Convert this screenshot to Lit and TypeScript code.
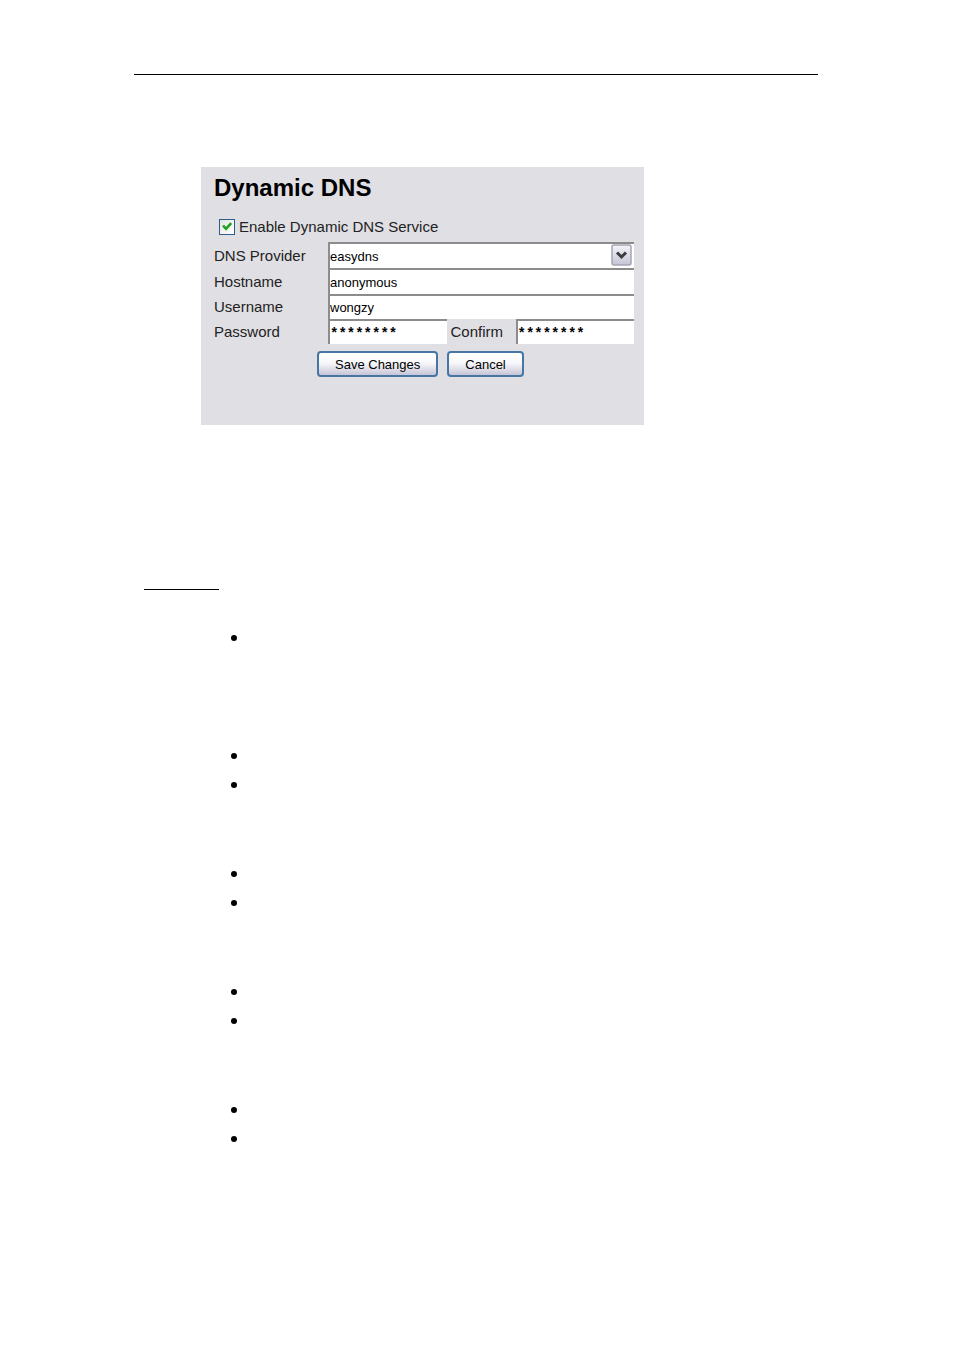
import { LitElement, html, css } from "lit";
import { customElement } from "lit/decorators.js";

@customElement("dns-panel")
class DnsPanel extends LitElement {
  static styles = css`
    :host {
      display: block;
      box-sizing: border-box;
      background: #e0dfe4;
      padding: 6px 10px 48px 13px;
      font-family: "Liberation Sans", Arial, sans-serif;
      font-size: 15px;
      color: #222;
    }
    * {
      box-sizing: border-box;
    }
    .title {
      margin: 0;
      font-size: 24px;
      line-height: 30px;
      font-weight: bold;
      color: #000;
    }
    .enable {
      display: flex;
      align-items: center;
      gap: 4px;
      height: 22px;
      margin: 13px 0 4px 5px;
    }
    .enable label {
      line-height: 16px;
    }
    .tick,
    .select {
      display: grid;
      align-items: center;
    }
    .tick > *,
    .select > * {
      grid-area: 1 / 1;
    }
    .box {
      appearance: none;
      width: 16px;
      height: 16px;
      margin: 0;
      border: 1px solid #2c5f8e;
      background: linear-gradient(135deg, #e4e4e0, #fff);
    }
    .mark {
      width: 16px;
      height: 16px;
      pointer-events: none;
      visibility: hidden;
    }
    .box:checked + .mark {
      visibility: visible;
    }
    .fields {
      display: grid;
      grid-template-columns: 114px 1fr;
      grid-template-rows: 26px 26px 25px 25px;
      align-items: center;
    }
    .field {
      width: 100%;
      min-width: 0;
      height: 100%;
      margin: 0;
      padding: 0;
      border: 0 solid #8c8c8c;
      border-width: 2px 0 0 2px;
      border-radius: 0;
      background: #fff;
      color: #000;
      font: 13px "Liberation Sans", Arial, sans-serif;
      outline: none;
      appearance: none;
    }
    .secret {
      padding-top: 2px;
      font: bold 14px "Liberation Mono", "Courier New", monospace;
    }
    .select {
      height: 100%;
      grid-template-rows: 100%;
    }
    .drop {
      justify-self: end;
      width: 21px;
      height: 22px;
      margin-right: 2px;
      pointer-events: none;
    }
    .pair {
      display: grid;
      grid-template-columns: 1fr 61px 1fr;
      column-gap: 4px;
      align-items: center;
      height: 100%;
    }
    .actions {
      display: flex;
      gap: 9px;
      margin: 7px 0 0 103px;
    }
    .button {
      height: 26px;
      padding: 0 16px;
      border: 2px solid #4576a4;
      border-radius: 4px;
      background: linear-gradient(#fff 0%, #f8f8fb 45%, #c6c5d7 100%);
      color: #000;
      font: 13px "Liberation Sans", Arial, sans-serif;
    }
  `;

  render() {
    return html`
      <h1 class="title">Dynamic DNS</h1>
      <div class="enable">
        <span class="tick">
          <input class="box" type="checkbox" id="enable" checked />
          <svg class="mark" viewBox="0 0 16 16" aria-hidden="true">
            <path d="M4 6.5 L7 9.8 L12.2 4.2" fill="none" stroke="#21a121" stroke-width="2.6" />
          </svg>
        </span>
        <label for="enable">Enable Dynamic DNS Service</label>
      </div>
      <div class="fields">
        <label for="provider">DNS Provider</label>
        <div class="select">
          <select class="field" id="provider">
            <option>easydns</option>
          </select>
          <svg class="drop" viewBox="0 0 21 22" aria-hidden="true">
            <defs>
              <linearGradient id="face" x2="0" y2="1">
                <stop offset="0" stop-color="#f4f4f8" />
                <stop offset="1" stop-color="#c4c4d6" />
              </linearGradient>
            </defs>
            <rect x="1" y="1" width="19" height="20" rx="2" fill="url(#face)" stroke="#a5a5b5" stroke-width="1.5" />
            <path d="M6 8.5 L10.5 13 L15 8.5" fill="none" stroke="#3c3c40" stroke-width="3" />
          </svg>
        </div>
        <label for="host">Hostname</label>
        <input class="field" id="host" type="text" value="anonymous" />
        <label for="user">Username</label>
        <input class="field" id="user" type="text" value="wongzy" />
        <label for="pass">Password</label>
        <div class="pair">
          <input class="field secret" id="pass" type="text" value="********" />
          <label for="confirm">Confirm</label>
          <input class="field secret" id="confirm" type="text" value="********" />
        </div>
      </div>
      <div class="actions">
        <button class="button" type="button">Save Changes</button>
        <button class="button" type="button">Cancel</button>
      </div>
    `;
  }
}

@customElement("app-root")
class AppRoot extends LitElement {
  static styles = css`
    :host {
      display: block;
      background: #fff;
      padding: 74px 136px 160px 134px;
      font-family: "Liberation Sans", Arial, sans-serif;
    }
    .rule {
      height: 1px;
      margin: 0;
      border: 0;
      background: #000;
    }
    .panel {
      max-width: 443px;
      margin: 92px 0 0 67px;
    }
    .underline {
      width: 75px;
      height: 1px;
      margin: 164px 0 33px 10px;
      border: 0;
      background: #000;
    }
    .group {
      list-style: none;
      min-height: 118px;
      margin: 0;
      padding: 0 0 0 97px;
    }
    .item {
      display: flex;
      align-items: center;
      height: 29px;
    }
    .item::before {
      content: "";
      width: 6px;
      height: 6px;
      border-radius: 50%;
      background: #000;
    }
  `;

  private groups = [1, 2, 2, 2, 2];

  render() {
    return html`
      <hr class="rule" />
      <dns-panel class="panel"></dns-panel>
      <hr class="underline" />
      ${this.groups.map(
        (count) => html`<ul class="group">
          ${Array.from({ length: count }, () => html`<li class="item"></li>`)}
        </ul>`
      )}
    `;
  }
}
